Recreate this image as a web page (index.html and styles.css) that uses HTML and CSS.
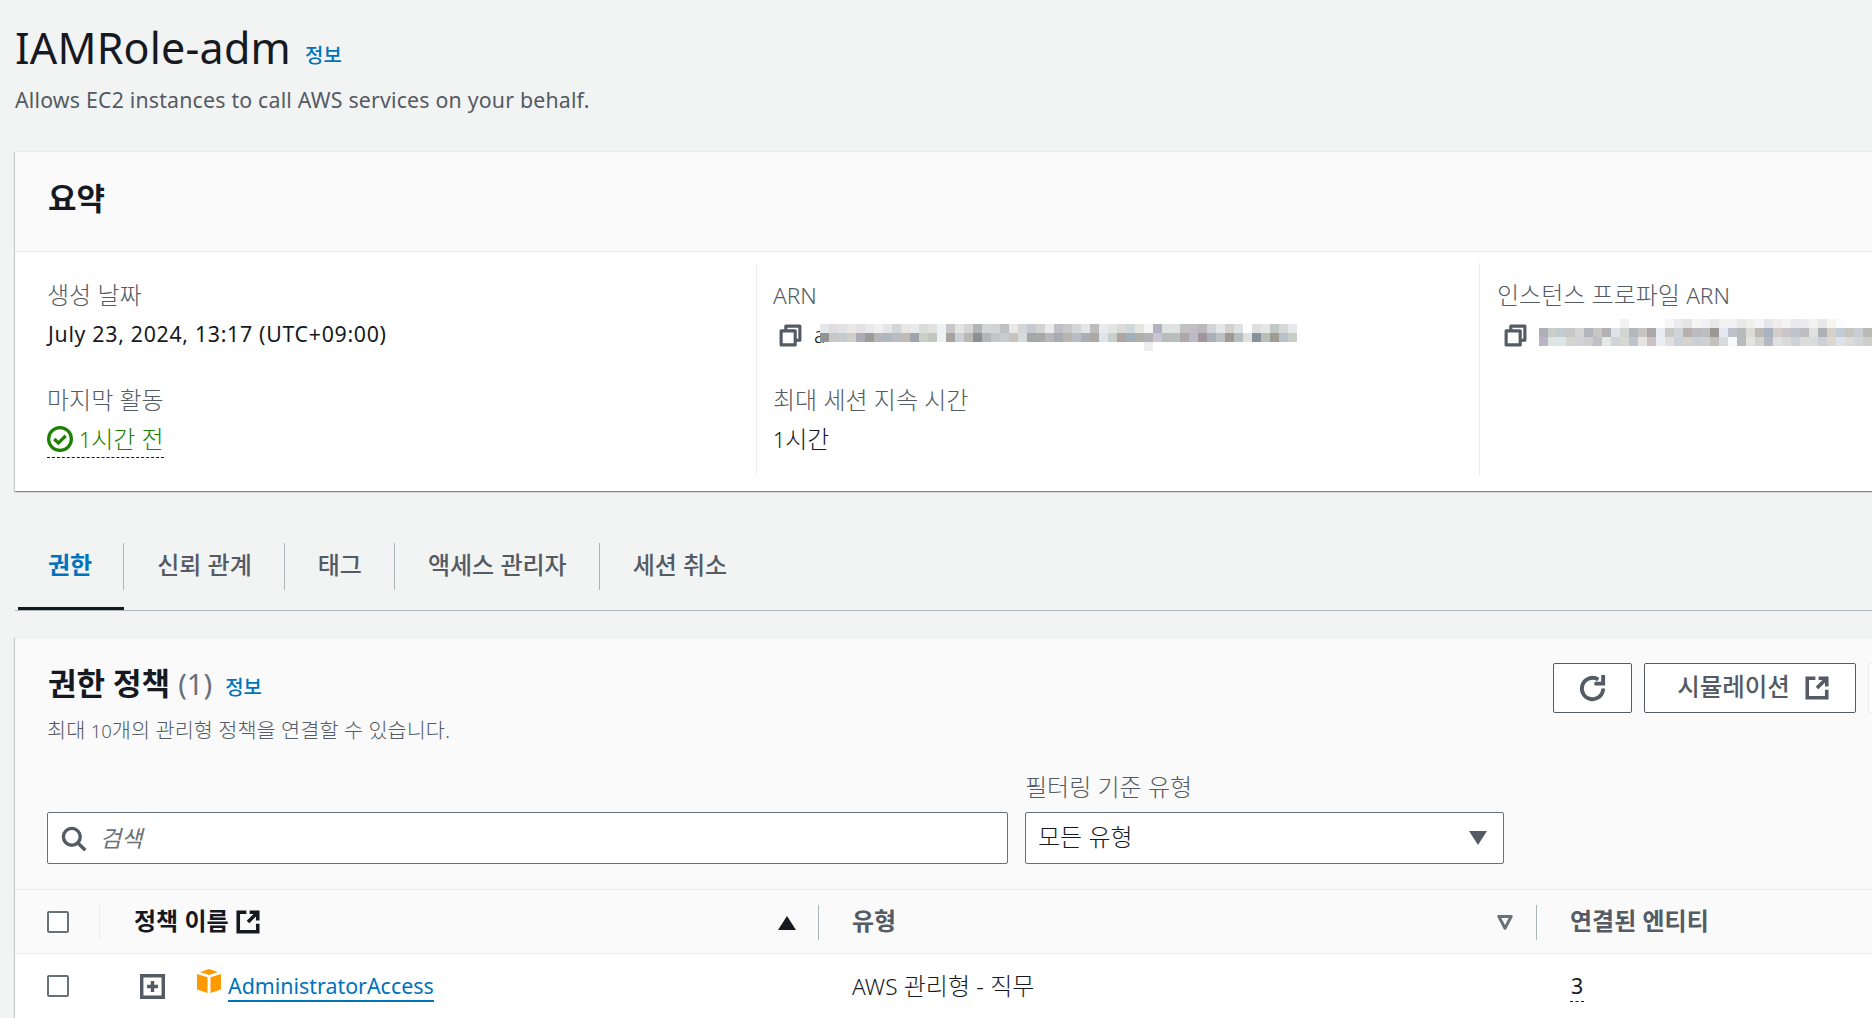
FILE: index.html
```html
<!DOCTYPE html>
<html lang="ko">
<head>
<meta charset="utf-8">
<title>IAMRole-adm</title>
<link rel="stylesheet" href="styles.css">
</head>
<body>
<div class="page">
  <header class="page-head">
    <div class="title-row"><h1>IAMRole-adm</h1><a class="info info-lg">정보</a></div>
    <p class="desc">Allows EC2 instances to call AWS services on your behalf.</p>
  </header>

  <section class="card summary">
    <div class="card-head"><h2>요약</h2></div>
    <div class="summary-grid">
      <div class="col col-first">
        <div class="field">
          <div class="label">생성 날짜</div>
          <div class="value value-date">July 23, 2024, 13:17 (UTC+09:00)</div>
        </div>
        <div class="field">
          <div class="label">마지막 활동</div>
          <div class="value status">
            <span class="status-inner">
              <svg class="ico-status" viewBox="0 0 16 16"><circle cx="8" cy="8" r="7" fill="none" stroke="#1d8102" stroke-width="2"/><path d="M4.500 8l2.500 2.500 4.500-4.500" fill="none" stroke="#1d8102" stroke-width="2"/></svg>
              <span><span class="lat">1</span>시간 전</span>
            </span>
          </div>
        </div>
      </div>
      <div class="col">
        <div class="field">
          <div class="label"><span class="lat-arn">ARN</span></div>
          <div class="value copy">
            <svg class="ico-copy" viewBox="0 0 16 16"><path d="M2 5h9v9H2zM5 5V2h9v9h-3" fill="none" stroke="#545b64" stroke-width="2" stroke-linejoin="round"/></svg>
            <span class="arn-a lat">a</span>
            <svg class="mosaic mosaic-arn" viewBox="0 0 53 3" shape-rendering="crispEdges">
              <rect x="0" y="0" width="1" height="1" fill="#e6e7e9"/><rect x="1" y="0" width="1" height="1" fill="#e0dde1"/><rect x="2" y="0" width="1" height="1" fill="#e2e2e5"/><rect x="3" y="0" width="1" height="1" fill="#e9e8e6"/><rect x="4" y="0" width="1" height="1" fill="#e2e2e2"/><rect x="5" y="0" width="1" height="1" fill="#e7e9ec"/><rect x="6" y="0" width="1" height="1" fill="#f1f0ee"/><rect x="7" y="0" width="1" height="1" fill="#e4e6e8"/><rect x="8" y="0" width="1" height="1" fill="#d5d6da"/><rect x="9" y="0" width="1" height="1" fill="#e8e6e3"/><rect x="10" y="0" width="1" height="1" fill="#e8eaeb"/><rect x="11" y="0" width="1" height="1" fill="#dbdddb"/><rect x="12" y="0" width="1" height="1" fill="#e1e2e0"/><rect x="13" y="0" width="1" height="1" fill="#eef1f4"/><rect x="14" y="0" width="1" height="1" fill="#c8c6c8"/><rect x="15" y="0" width="1" height="1" fill="#e6e4e0"/><rect x="16" y="0" width="1" height="1" fill="#d5d5d6"/><rect x="17" y="0" width="1" height="1" fill="#b5b5b8"/><rect x="18" y="0" width="1" height="1" fill="#d4d5d8"/><rect x="19" y="0" width="1" height="1" fill="#d2d3d6"/><rect x="20" y="0" width="1" height="1" fill="#bfc0c4"/><rect x="21" y="0" width="1" height="1" fill="#eae8e4"/><rect x="22" y="0" width="1" height="1" fill="#d4d5d8"/><rect x="23" y="0" width="1" height="1" fill="#c8c8cf"/><rect x="24" y="0" width="1" height="1" fill="#d3d3d3"/><rect x="25" y="0" width="1" height="1" fill="#ebebe9"/><rect x="26" y="0" width="1" height="1" fill="#bfc1c7"/><rect x="27" y="0" width="1" height="1" fill="#c8c8cc"/><rect x="28" y="0" width="1" height="1" fill="#d5d5d7"/><rect x="29" y="0" width="1" height="1" fill="#e4e5e6"/><rect x="30" y="0" width="1" height="1" fill="#bcbcbb"/><rect x="31" y="0" width="1" height="1" fill="#e8eaed"/><rect x="32" y="0" width="1" height="1" fill="#e3e5e3"/><rect x="33" y="0" width="1" height="1" fill="#dbdbd9"/><rect x="34" y="0" width="1" height="1" fill="#ced8d8"/><rect x="35" y="0" width="1" height="1" fill="#e5e5e2"/><rect x="36" y="0" width="1" height="1" fill="#f5f5f5"/><rect x="37" y="0" width="1" height="1" fill="#b3b0c0"/><rect x="38" y="0" width="1" height="1" fill="#dfe3e0"/><rect x="39" y="0" width="1" height="1" fill="#dfe3e1"/><rect x="40" y="0" width="1" height="1" fill="#c2c2c2"/><rect x="41" y="0" width="1" height="1" fill="#c0bec4"/><rect x="42" y="0" width="1" height="1" fill="#bcb8ba"/><rect x="43" y="0" width="1" height="1" fill="#d3d3da"/><rect x="44" y="0" width="1" height="1" fill="#e5e6e9"/><rect x="45" y="0" width="1" height="1" fill="#d3d0cd"/><rect x="46" y="0" width="1" height="1" fill="#dfe2e5"/><rect x="48" y="0" width="1" height="1" fill="#dedede"/><rect x="49" y="0" width="1" height="1" fill="#e6e6e6"/><rect x="50" y="0" width="1" height="1" fill="#c0c8c6"/><rect x="51" y="0" width="1" height="1" fill="#d8d8d8"/><rect x="52" y="0" width="1" height="1" fill="#e6e8ea"/>
              <rect x="0" y="1" width="1" height="1" fill="#8f9396"/><rect x="1" y="1" width="1" height="1" fill="#c8c9c5"/><rect x="2" y="1" width="1" height="1" fill="#c4ccd0"/><rect x="3" y="1" width="1" height="1" fill="#cfcfcb"/><rect x="4" y="1" width="1" height="1" fill="#aeabb7"/><rect x="5" y="1" width="1" height="1" fill="#9b9b98"/><rect x="6" y="1" width="1" height="1" fill="#b5b7ba"/><rect x="7" y="1" width="1" height="1" fill="#afb8bf"/><rect x="8" y="1" width="1" height="1" fill="#b8bcc4"/><rect x="9" y="1" width="1" height="1" fill="#c2b9b2"/><rect x="10" y="1" width="1" height="1" fill="#a0a3ad"/><rect x="11" y="1" width="1" height="1" fill="#cccfca"/><rect x="12" y="1" width="1" height="1" fill="#c3c6be"/><rect x="13" y="1" width="1" height="1" fill="#eef1f3"/><rect x="14" y="1" width="1" height="1" fill="#a8a3a0"/><rect x="15" y="1" width="1" height="1" fill="#cbd0d6"/><rect x="16" y="1" width="1" height="1" fill="#b8b8b4"/><rect x="17" y="1" width="1" height="1" fill="#8f8f92"/><rect x="18" y="1" width="1" height="1" fill="#b2b6b8"/><rect x="19" y="1" width="1" height="1" fill="#c2c5ca"/><rect x="20" y="1" width="1" height="1" fill="#c8cacc"/><rect x="21" y="1" width="1" height="1" fill="#c8c2bc"/><rect x="22" y="1" width="1" height="1" fill="#d5dadc"/><rect x="23" y="1" width="1" height="1" fill="#a4a6a8"/><rect x="24" y="1" width="1" height="1" fill="#a8a8a6"/><rect x="25" y="1" width="1" height="1" fill="#b8b6ba"/><rect x="26" y="1" width="1" height="1" fill="#a8abb2"/><rect x="27" y="1" width="1" height="1" fill="#b8b4b0"/><rect x="28" y="1" width="1" height="1" fill="#b8bcc4"/><rect x="29" y="1" width="1" height="1" fill="#acaeb5"/><rect x="30" y="1" width="1" height="1" fill="#aba7a4"/><rect x="31" y="1" width="1" height="1" fill="#dde4ec"/><rect x="32" y="1" width="1" height="1" fill="#c8d0cc"/><rect x="33" y="1" width="1" height="1" fill="#aea5a2"/><rect x="34" y="1" width="1" height="1" fill="#a0afb8"/><rect x="35" y="1" width="1" height="1" fill="#aeaeaa"/><rect x="36" y="1" width="1" height="1" fill="#b2b1b4"/><rect x="37" y="1" width="1" height="1" fill="#cbc3d6"/><rect x="38" y="1" width="1" height="1" fill="#b8bebc"/><rect x="39" y="1" width="1" height="1" fill="#b8bebc"/><rect x="40" y="1" width="1" height="1" fill="#ada8a5"/><rect x="41" y="1" width="1" height="1" fill="#babac8"/><rect x="42" y="1" width="1" height="1" fill="#a0979e"/><rect x="43" y="1" width="1" height="1" fill="#a8b0b8"/><rect x="44" y="1" width="1" height="1" fill="#bec0c4"/><rect x="45" y="1" width="1" height="1" fill="#a09a95"/><rect x="46" y="1" width="1" height="1" fill="#b8bec2"/><rect x="47" y="1" width="1" height="1" fill="#e0e0dc"/><rect x="48" y="1" width="1" height="1" fill="#87919a"/><rect x="49" y="1" width="1" height="1" fill="#b8bcba"/><rect x="50" y="1" width="1" height="1" fill="#9c9c92"/><rect x="51" y="1" width="1" height="1" fill="#b8c2c8"/><rect x="52" y="1" width="1" height="1" fill="#c8ccc6"/>
              <rect x="36" y="2" width="1" height="1" fill="#eeeeee"/>
            </svg>
          </div>
        </div>
        <div class="field">
          <div class="label">최대 세션 지속 시간</div>
          <div class="value"><span class="lat">1</span>시간</div>
        </div>
      </div>
      <div class="col col-third">
        <div class="field">
          <div class="label">인스턴스 프로파일 <span class="lat-arn">ARN</span></div>
          <div class="value copy">
            <svg class="ico-copy" viewBox="0 0 16 16"><path d="M2 5h9v9H2zM5 5V2h9v9h-3" fill="none" stroke="#545b64" stroke-width="2" stroke-linejoin="round"/></svg>
            <svg class="mosaic mosaic-profile" viewBox="0 0 37 3" shape-rendering="crispEdges">
              <rect x="9" y="0" width="1" height="1" fill="#f2f2f2"/><rect x="14" y="0" width="1" height="1" fill="#f6f6f6"/><rect x="15" y="0" width="1" height="1" fill="#ebebee"/><rect x="16" y="0" width="1" height="1" fill="#e5e5e5"/><rect x="17" y="0" width="1" height="1" fill="#f5f5f5"/><rect x="18" y="0" width="1" height="1" fill="#f2f2f5"/><rect x="19" y="0" width="1" height="1" fill="#e8e8e8"/><rect x="20" y="0" width="1" height="1" fill="#f3f2f3"/><rect x="21" y="0" width="1" height="1" fill="#f1f1f4"/><rect x="22" y="0" width="1" height="1" fill="#e8e8e8"/><rect x="23" y="0" width="1" height="1" fill="#eff0ed"/><rect x="24" y="0" width="1" height="1" fill="#f3f5f6"/><rect x="25" y="0" width="1" height="1" fill="#e6e6e8"/><rect x="26" y="0" width="1" height="1" fill="#efeded"/><rect x="27" y="0" width="1" height="1" fill="#f4f4f4"/><rect x="28" y="0" width="1" height="1" fill="#e8e9ec"/><rect x="29" y="0" width="1" height="1" fill="#eeebee"/><rect x="30" y="0" width="1" height="1" fill="#f2f2f2"/><rect x="31" y="0" width="1" height="1" fill="#e8e8ea"/><rect x="32" y="0" width="1" height="1" fill="#f6f5f0"/><rect x="33" y="0" width="1" height="1" fill="#fafcfd"/>
              <rect x="0" y="1" width="1" height="1" fill="#b0aeb6"/><rect x="1" y="1" width="1" height="1" fill="#c8cecc"/><rect x="2" y="1" width="1" height="1" fill="#c0ccd0"/><rect x="3" y="1" width="1" height="1" fill="#c8c8c8"/><rect x="4" y="1" width="1" height="1" fill="#d4d4d4"/><rect x="5" y="1" width="1" height="1" fill="#b0b6bc"/><rect x="6" y="1" width="1" height="1" fill="#cac6c2"/><rect x="7" y="1" width="1" height="1" fill="#b2b2b6"/><rect x="8" y="1" width="1" height="1" fill="#dfe2e8"/><rect x="9" y="1" width="1" height="1" fill="#d2d6d2"/><rect x="10" y="1" width="1" height="1" fill="#b2b8bc"/><rect x="11" y="1" width="1" height="1" fill="#c8c4c4"/><rect x="12" y="1" width="1" height="1" fill="#aca6a8"/><rect x="13" y="1" width="1" height="1" fill="#e8ecf0"/><rect x="14" y="1" width="1" height="1" fill="#c8c9c5"/><rect x="15" y="1" width="1" height="1" fill="#ced4d8"/><rect x="16" y="1" width="1" height="1" fill="#b8b0ac"/><rect x="17" y="1" width="1" height="1" fill="#bcbcc0"/><rect x="18" y="1" width="1" height="1" fill="#bcbfc2"/><rect x="19" y="1" width="1" height="1" fill="#9d9792"/><rect x="20" y="1" width="1" height="1" fill="#e4e8f2"/><rect x="21" y="1" width="1" height="1" fill="#bfc0cc"/><rect x="22" y="1" width="1" height="1" fill="#b8babc"/><rect x="23" y="1" width="1" height="1" fill="#dddbd5"/><rect x="24" y="1" width="1" height="1" fill="#bcb8b2"/><rect x="25" y="1" width="1" height="1" fill="#a8b2c2"/><rect x="26" y="1" width="1" height="1" fill="#d2cdc8"/><rect x="27" y="1" width="1" height="1" fill="#c8c4c8"/><rect x="28" y="1" width="1" height="1" fill="#bcc4cc"/><rect x="29" y="1" width="1" height="1" fill="#bebcbc"/><rect x="30" y="1" width="1" height="1" fill="#e0e2e0"/><rect x="31" y="1" width="1" height="1" fill="#aeb0b8"/><rect x="32" y="1" width="1" height="1" fill="#d6d0c8"/><rect x="33" y="1" width="1" height="1" fill="#c2ccd6"/><rect x="34" y="1" width="1" height="1" fill="#c8c4be"/><rect x="35" y="1" width="1" height="1" fill="#c8ced4"/><rect x="36" y="1" width="1" height="1" fill="#b8bab4"/>
              <rect x="0" y="2" width="1" height="1" fill="#bcb4c2"/><rect x="1" y="2" width="1" height="1" fill="#dce4e4"/><rect x="2" y="2" width="1" height="1" fill="#dde6e6"/><rect x="3" y="2" width="1" height="1" fill="#d8d4d2"/><rect x="4" y="2" width="1" height="1" fill="#d0d2d6"/><rect x="5" y="2" width="1" height="1" fill="#cececc"/><rect x="6" y="2" width="1" height="1" fill="#c0c0c8"/><rect x="7" y="2" width="1" height="1" fill="#e6e8e6"/><rect x="8" y="2" width="1" height="1" fill="#d0d4d8"/><rect x="9" y="2" width="1" height="1" fill="#d8d8d2"/><rect x="10" y="2" width="1" height="1" fill="#bcc4cc"/><rect x="11" y="2" width="1" height="1" fill="#e6e4e0"/><rect x="12" y="2" width="1" height="1" fill="#ccc2c2"/><rect x="13" y="2" width="1" height="1" fill="#e8eef2"/><rect x="14" y="2" width="1" height="1" fill="#e0dee0"/><rect x="15" y="2" width="1" height="1" fill="#ced2d8"/><rect x="16" y="2" width="1" height="1" fill="#d8d2cc"/><rect x="17" y="2" width="1" height="1" fill="#c8d0d6"/><rect x="18" y="2" width="1" height="1" fill="#d0d2d2"/><rect x="19" y="2" width="1" height="1" fill="#c4c0bc"/><rect x="20" y="2" width="1" height="1" fill="#d8dadc"/><rect x="21" y="2" width="1" height="1" fill="#f6f8fa"/><rect x="22" y="2" width="1" height="1" fill="#b8babc"/><rect x="23" y="2" width="1" height="1" fill="#e2e4e2"/><rect x="24" y="2" width="1" height="1" fill="#d4d4d2"/><rect x="25" y="2" width="1" height="1" fill="#b8b8c4"/><rect x="26" y="2" width="1" height="1" fill="#dfe2e0"/><rect x="27" y="2" width="1" height="1" fill="#dadada"/><rect x="28" y="2" width="1" height="1" fill="#ccd2d6"/><rect x="29" y="2" width="1" height="1" fill="#dedcda"/><rect x="30" y="2" width="1" height="1" fill="#d8dcdc"/><rect x="31" y="2" width="1" height="1" fill="#ced0d6"/><rect x="32" y="2" width="1" height="1" fill="#dcd8d0"/><rect x="33" y="2" width="1" height="1" fill="#dde2ec"/><rect x="34" y="2" width="1" height="1" fill="#dedcd6"/><rect x="35" y="2" width="1" height="1" fill="#d2d6da"/><rect x="36" y="2" width="1" height="1" fill="#cecec8"/>
            </svg>
          </div>
        </div>
      </div>
    </div>
  </section>

  <nav class="tabs">
    <a class="tab tab-active"><span class="tab-text">권한</span></a>
    <a class="tab"><span class="tab-text">신뢰 관계</span></a>
    <a class="tab"><span class="tab-text">태그</span></a>
    <a class="tab"><span class="tab-text">액세스 관리자</span></a>
    <a class="tab tab-last"><span class="tab-text">세션 취소</span></a>
  </nav>

  <section class="card policies">
    <div class="toolbar">
      <div class="toolbar-title">
        <div class="heading-row"><h2>권한 정책</h2><span class="count">(1)</span><a class="info">정보</a></div>
        <p class="hint">최대 <span class="lat-sm">10</span>개의 관리형 정책을 연결할 수 있습니다.</p>
      </div>
      <button class="btn btn-icon"><svg class="ico-btn" viewBox="0 0 16 16"><path d="M13.500 8A5.500 5.500 0 1 1 11 3.400" fill="none" stroke="#545b64" stroke-width="2"/><path d="M13.500 1v4.500H9" fill="none" stroke="#545b64" stroke-width="2"/></svg></button>
      <button class="btn">시뮬레이션<svg class="ico-ext" viewBox="0 0 16 16"><path d="M7 2H2v12h12V9M9 2h5v5M14 2L8 8" fill="none" stroke="#545b64" stroke-width="2.200"/></svg></button>
      <button class="btn btn-off"></button>
    </div>

    <div class="filters">
      <div class="search">
        <svg class="ico-search" viewBox="0 0 16 16"><circle cx="7" cy="7" r="5" fill="none" stroke="#545b64" stroke-width="2"/><path d="M10.500 10.500L15 15" fill="none" stroke="#545b64" stroke-width="2"/></svg>
        <span class="placeholder">검색</span>
      </div>
      <div class="filter">
        <div class="filter-label">필터링 기준 유형</div>
        <div class="select"><span class="select-text">모든 유형</span><span class="caret"></span></div>
      </div>
    </div>

    <div class="table-row table-head">
      <div class="cell cell-check"><span class="checkbox"></span></div>
      <div class="cell cell-name">
        <span class="th-text">정책 이름</span>
        <svg class="ico-ext-dark" viewBox="0 0 16 16"><path d="M7 2H2v12h12V9M9 2h5v5M14 2L8 8" fill="none" stroke="#16191f" stroke-width="2.200"/></svg>
        <span class="sort-up"></span>
      </div>
      <div class="cell cell-type">
        <span class="th-text">유형</span>
        <svg class="sort-down" viewBox="0 0 16 16"><path d="M3 3.500h10L8 13z" fill="none" stroke="#687078" stroke-width="2.400" stroke-linejoin="round"/></svg>
      </div>
      <div class="cell cell-ent"><span class="th-text">연결된 엔티티</span></div>
    </div>

    <div class="table-row table-body">
      <div class="cell cell-check"><span class="checkbox"></span></div>
      <div class="cell cell-name">
        <svg class="ico-expand" viewBox="0 0 16 16"><path d="M1 1h14v14H1z" fill="none" stroke="#545b64" stroke-width="2.400"/><path d="M8 4.500v7M4.500 8h7" fill="none" stroke="#545b64" stroke-width="2.200"/></svg>
        <svg class="ico-cube" viewBox="0 0 24 24"><path d="M12 0l9 3-9 3-9-3z" fill="#ff9900"/><path d="M0 5l10.500 3.200V24L0 20.500z" fill="#ff9900"/><path d="M24 5l-10.500 3.200V24L24 20.500z" fill="#ff9900"/></svg>
        <a class="policy-link">AdministratorAccess</a>
      </div>
      <div class="cell cell-type"><span class="td-text"><span class="lat-arn">AWS</span> 관리형 - 직무</span></div>
      <div class="cell cell-ent"><span class="ent-count">3</span></div>
    </div>
  </section>
</div>
</body>
</html>
```
FILE: styles.css
```css
* { box-sizing: border-box; }
html, body { margin: 0; padding: 0; overflow: hidden; height: 100%; }
body {
  background: #f2f3f3;
  color: #16191f;
  font-family: "Noto Sans", "Noto Sans CJK KR", sans-serif;
  font-size: 24px;
}
.page { width: 1960px; }
h1, h2, p { margin: 0; font-weight: 400; }
.lat { font-size: 21.3px; }
.lat-arn { font-size: 22.6px; }
.lat-sm { font-size: 18.5px; }

.page-head { height: 151px; padding: 21px 0 0 15px; }
.title-row { display: flex; align-items: baseline; gap: 14px; height: 54px; }
h1 { font-size: 43px; letter-spacing: .2px; line-height: 54px; }
.info { color: #0073bb; font-size: 20px; font-weight: 500; }
.info-lg { position: relative; top: -1px; }
.desc { margin-top: 10px; font-size: 21.3px; letter-spacing: .2px; line-height: 30px; color: #545b64; }

.card {
  margin-left: 15px;
  background: #fff;
  border-top: 1px solid #eaeded;
  box-shadow: 0 1px 1px 0 rgba(0,28,36,.3), 1px 1px 1px 0 rgba(0,28,36,.15), -1px 1px 1px 0 rgba(0,28,36,.15);
}
.card-head {
  height: 100px;
  padding: 0 33px 7px;
  display: flex;
  align-items: center;
  background: #fafafa;
  border-bottom: 1px solid #eaeded;
}
h2 { font-size: 31px; font-weight: 700; line-height: 40px; }

.summary { height: 340px; }
.summary-grid {
  display: grid;
  grid-template-columns: 741px 723px 1fr;
  padding-top: 11px;
}
.col { height: 212px; padding: 17px 0 0 16px; border-left: 1px solid #eaeded; }
.col-first { padding-left: 32px; border-left: 0; }
.col-third { padding-left: 17px; }
.field { margin-bottom: 35px; }
.label { height: 30px; line-height: 30px; color: #545b64; margin-bottom: 10px; font-weight: 300; }
.value { height: 30px; line-height: 28px; font-weight: 300; }
.value-date { margin-left: 1px; font-size: 21.3px; letter-spacing: .7px; font-weight: 400; }
.status-inner {
  display: inline-flex;
  align-items: center;
  gap: 6px;
  height: 33px;
  padding-bottom: 4px;
  color: #1d8102;
  border-bottom: 1px dashed #16191f;
}
.ico-status { width: 26px; height: 26px; }
.copy { display: flex; align-items: center; padding-left: 5px; }
.col-third .copy { padding-left: 6px; }
.ico-copy { width: 25px; height: 25px; flex: none; }
.arn-a { margin-left: 11px; color: #16191f; }
.mosaic { display: block; flex: none; height: 27px; }
.mosaic-arn { width: 477px; margin: 5px 0 0 -5px; }
.mosaic-profile { width: 333px; margin: -5px 0 0 11px; }

.tabs {
  display: flex;
  margin: 30px 0 0 15px;
  height: 90px;
  padding: 0 0 0 3px;
  border-bottom: 1px solid #aab7b8;
  align-items: flex-end;
}
.tab {
  position: relative;
  height: 67px;
  padding: 0 33px 20px;
  color: #545b64;
  font-weight: 500;
  line-height: 43px;
}
.tab-text { display: block; height: 47px; }
.tab::after {
  content: "";
  position: absolute;
  right: 0;
  top: 0;
  height: 47px;
  width: 1px;
  background: #aab7b8;
}
.tab-last::after { display: none; }
.tab-active { color: #0073bb; padding: 0 32px 20px 30px; font-weight: 700; border-bottom: 3px solid #16191f; }

.policies { margin-top: 26px; height: 500px; }
.toolbar { display: flex; align-items: flex-start; padding: 25px 0 0 32px; gap: 12px; height: 113px; background: #fafafa; }
.toolbar-title { flex: 0 0 1494px; }
.heading-row { display: flex; align-items: baseline; gap: 8px; height: 40px; padding-left: 1px; }
.count { font-size: 29px; color: #687078; margin-right: 5px; }
.hint { margin-top: 13px; font-size: 20.8px; line-height: 28px; color: #545b64; font-weight: 300; }
.btn {
  flex: none;
  display: flex;
  align-items: center;
  justify-content: center;
  height: 50px;
  width: 212px;
  background: #fff;
  border: 1px solid #545b64;
  border-radius: 2px;
  color: #545b64;
  font: 500 24.5px "Noto Sans", "Noto Sans CJK KR", sans-serif;
  gap: 14px;
  padding: 0 0 6px 7px;
}
.btn-icon { width: 79px; padding: 0; }
.btn-off { width: 91px; border-color: #eaeded; }
.ico-btn { width: 31px; height: 31px; }
.ico-ext { width: 26px; height: 26px; margin-top: 6px; }

.filters {
  display: grid;
  grid-template-columns: 961px 479px;
  gap: 17px;
  align-items: end;
  padding: 0 0 25px 32px;
  height: 138px;
  background: #fafafa;
}
.search, .select {
  height: 52px;
  display: flex;
  align-items: center;
  background: #fff;
  border: 1px solid #687078;
  border-radius: 2px;
}
.search { padding-left: 12px; }
.ico-search { width: 27px; height: 27px; }
.placeholder { margin-left: 13px; padding-bottom: 2px; font-size: 23px; font-style: italic; color: #687078; }
.filter-label { height: 30px; line-height: 30px; margin-bottom: 10px; color: #545b64; font-weight: 300; }
.select { justify-content: space-between; padding: 0 16px 0 12px; font-weight: 300; }
.select-text { padding-bottom: 5px; }
.caret {
  width: 0;
  height: 0;
  border-left: 9px solid transparent;
  border-right: 9px solid transparent;
  border-top: 14px solid #545b64;
}

.table-row { display: grid; grid-template-columns: 85px 719px 718px 1fr; }
.table-head { height: 65px; background: #fafafa; border-top: 1px solid #eaeded; border-bottom: 1px solid #eaeded; }
.table-body { height: 64px; }
.cell { display: flex; align-items: center; position: relative; }
.cell-check { padding-left: 32px; }
.checkbox { width: 22px; height: 22px; background: #fff; border: 2px solid #687078; border-radius: 2px; }
.table-head .cell::after {
  content: "";
  position: absolute;
  right: 0;
  top: 15px;
  height: 35px;
  width: 1px;
  background: #aab7b8;
}
.table-head .cell-check::after { background: #eaeded; }
.table-head .cell-ent::after { display: none; }
.cell-name { padding-left: 34px; }
.th-text { font-weight: 700; padding-bottom: 5px; }
.cell-type .th-text, .cell-ent .th-text { color: #545b64; }
.cell-type, .cell-ent { padding-left: 33px; }
.ico-ext-dark { width: 26px; height: 26px; margin-left: 6px; }
.sort-up {
  position: absolute;
  right: 23px;
  top: 26px;
  width: 0;
  height: 0;
  border-left: 9px solid transparent;
  border-right: 9px solid transparent;
  border-bottom: 14px solid #16191f;
}
.sort-down { position: absolute; right: 22px; top: 22px; width: 20px; height: 20px; }
.ico-expand { width: 25px; height: 25px; margin-left: 6px; }
.ico-cube { width: 24px; height: 24px; margin: -10px 0 0 32px; }
.policy-link {
  margin-left: 7px;
  color: #0073bb;
  font-size: 21.4px;
  border-bottom: 2px solid #0073bb;
  line-height: 28px;
  margin-top: 2px;
}
.td-text { font-weight: 300; padding-bottom: 4px; }
.ent-count { font-size: 21.3px; border-bottom: 1px dashed #16191f; line-height: 30px; padding: 0 1px; }
```
